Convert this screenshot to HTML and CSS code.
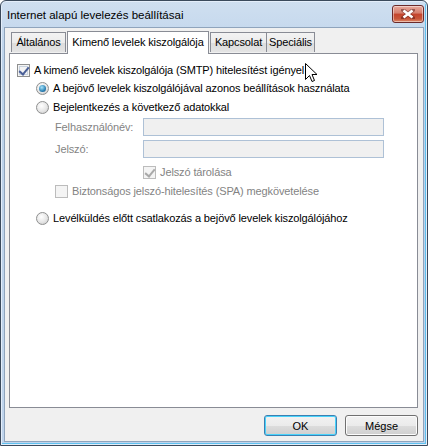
FILE: index.html
```html
<!DOCTYPE html>
<html lang="hu">
<head>
  <meta charset="UTF-8">
  <title>Internet alapú levelezés beállításai</title>
  <link rel="stylesheet" href="styles.css">
</head>
<body>
  <div class="window">
    <div class="titlebar">
      <span class="title">Internet alapú levelezés beállításai</span>
      <button class="close">
        <svg width="14" height="10" viewBox="0 0 14 10">
          <path d="M2 1 L12 9 M12 1 L2 9" stroke="#4a1010" stroke-width="4" stroke-linecap="square" opacity="0.45"/>
          <path d="M2.5 1.5 L11.5 8.5 M11.5 1.5 L2.5 8.5" stroke="#fff" stroke-width="2.6"/>
        </svg>
      </button>
    </div>

    <div class="client">
      <div class="tabs">
        <div class="tab tab-general">Általános</div>
        <div class="tab active tab-outgoing">Kimenő levelek kiszolgálója</div>
        <div class="tab tab-conn">Kapcsolat</div>
        <div class="tab tab-special">Speciális</div>
      </div>

      <div class="panel">
        <div class="row row-smtp">
          <span class="check checked"></span>
          <span>A kimenő levelek kiszolgálója (SMTP) hitelesítést igényel</span>
        </div>
        <div class="row radio-row">
          <span class="radio on"></span>
          <span>A bejövő levelek kiszolgálójával azonos beállítások használata</span>
        </div>
        <div class="row radio-row row-login">
          <span class="radio"></span>
          <span>Bejelentkezés a következő adatokkal</span>
        </div>
        <div class="field-row row-user">
          <span class="field-label">Felhasználónév:</span>
          <span class="input"></span>
        </div>
        <div class="field-row row-pass">
          <span class="field-label">Jelszó:</span>
          <span class="input"></span>
        </div>
        <div class="row row-remember disabled">
          <span class="check checked"></span>
          <span>Jelszó tárolása</span>
        </div>
        <div class="row row-spa disabled">
          <span class="check"></span>
          <span>Biztonságos jelszó-hitelesítés (SPA) megkövetelése</span>
        </div>
        <div class="row radio-row row-before">
          <span class="radio"></span>
          <span>Levélküldés előtt csatlakozás a bejövő levelek kiszolgálójához</span>
        </div>
      </div>

      <div class="buttons">
        <button class="btn default">OK</button>
        <button class="btn">Mégse</button>
      </div>
    </div>

    <svg class="cursor" width="13" height="20" viewBox="0 0 13 20">
      <path d="M0.5 0.5 L0.5 16.5 L4.5 12.5 L7 18.5 L9.5 17.5 L7 11.5 L12 11.5 Z" fill="#fff" stroke="#000" stroke-width="1" stroke-linejoin="miter"/>
    </svg>
  </div>
</body>
</html>
```

FILE: styles.css
```css
* {
  margin: 0;
  padding: 0;
  box-sizing: border-box;
}

body {
  font-family: 'Liberation Sans', Arial, sans-serif;
  font-size: 11px;
  letter-spacing: -0.12px;
  color: #000;
  background: #fff;
}

.window {
  position: relative;
  width: 428px;
  height: 446px;
  border: 1px solid #3b4a5c;
  border-radius: 6px 6px 0 0;
  background: linear-gradient(#cfdff0, #bcd2ea 60px, #bfd4ec);
  box-shadow: inset 0 0 0 1px #e4eefa, inset -2px -2px 0 0 #5fc1ef;
  padding: 0 3px 3px 3px;
  display: flex;
  flex-direction: column;
}

/* title bar */
.titlebar {
  height: 26px;
  display: flex;
  align-items: flex-start;
  justify-content: space-between;
}

.title {
  margin: 7px 0 0 3px;
  line-height: 14px;
  font-size: 11.5px;
  letter-spacing: 0;
  color: #000;
}

.close {
  margin: 4px 0 0 0;
  width: 32px;
  height: 18px;
  border: 1px solid #6b2a2a;
  border-radius: 3px;
  background: linear-gradient(#e9a99c, #d47d6c 45%, #c4432c 50%, #c8563a 80%, #e08c6a);
  box-shadow: inset 0 0 0 1px rgba(255,255,255,0.45);
  display: flex;
  align-items: center;
  justify-content: center;
}

/* client area */
.client {
  flex: 1;
  background: #f0f0f0;
  border: 1px solid #8fa4bc;
  padding: 3px 5px 0 4px;
  display: flex;
  flex-direction: column;
}

.tabs {
  display: flex;
  align-items: flex-end;
  height: 22px;
  padding-left: 2px;
  position: relative;
  z-index: 1;
}

.tab {
  height: 20px;
  border: 1px solid #898c95;
  border-bottom: none;
  background: linear-gradient(#f3f3f3, #ececec 50%, #dcdcdc 51%, #e4e4e4);
  text-align: center;
  line-height: 19px;
  margin-bottom: 1px;
  white-space: nowrap;
}

.tab.active {
  height: 23px;
  background: #fff;
  line-height: 20px;
  margin-bottom: -1px;
  margin-left: 1px;
  margin-right: 1px;
}

.tab-general { width: 55px; }
.tab-outgoing { width: 142px; }
.tab-conn { width: 57px; }
.tab-special { width: 49px; margin-left: -1px; }

.panel {
  height: 355px;
  background: #fff;
  border: 1px solid #898c95;
  padding-top: 6px;
}

/* rows */
.row {
  display: flex;
  align-items: center;
  height: 18px;
  gap: 4px;
  white-space: nowrap;
}

.row-smtp { padding-left: 7px; margin-top: 1px; }
.radio-row { padding-left: 26px; }
.row-login { margin-top: 1px; }
.row-remember { padding-left: 133px; margin-top: 5px; }
.row-spa { padding-left: 45px; margin-top: 1px; }
.row-before { margin-top: 9px; }

.disabled { color: #838383; }

.field-row {
  display: flex;
  align-items: center;
  height: 18px;
  padding-left: 45px;
}

.row-user { margin-top: 2px; }
.row-pass { margin-top: 4px; }

.field-label {
  width: 88px;
  color: #838383;
}

.input {
  width: 241px;
  height: 18px;
  border: 1px solid #aec1d6;
  background: #f0f0f0;
}

/* check boxes and radio buttons */
.check {
  width: 13px;
  height: 13px;
  border: 1px solid #8e8f8f;
  background: #f4f4f4;
  box-shadow: inset 0 0 0 1px #f4f4f4, inset 0 0 0 2px #c8d2de;
  position: relative;
  flex: none;
}

.check.checked::after {
  content: "";
  position: absolute;
  left: 3px;
  top: 0;
  width: 4px;
  height: 8px;
  border-right: 2px solid #4a5f97;
  border-bottom: 2px solid #4a5f97;
  transform: rotate(40deg);
}

.disabled .check {
  border-color: #bcbcbc;
  box-shadow: none;
  background: #f4f4f4;
}

.disabled .check.checked::after {
  border-color: #a9a9a9;
}

.radio {
  width: 13px;
  height: 13px;
  border-radius: 50%;
  border: 1px solid #8e8f8f;
  background: radial-gradient(circle at 40% 35%, #ffffff, #e6e6e6 55%, #c4c4c4);
  position: relative;
  flex: none;
}

.radio.on::after {
  content: "";
  position: absolute;
  left: 2px;
  top: 2px;
  width: 7px;
  height: 7px;
  border-radius: 50%;
  background: radial-gradient(circle at 40% 35%, #a8e4fb, #2d83b6 60%, #0f3f6e);
}

/* buttons */
.buttons {
  display: flex;
  justify-content: flex-end;
  gap: 8px;
  padding-top: 7px;
  padding-right: 0;
}

.btn {
  width: 73px;
  height: 21px;
  font-family: inherit;
  font-size: 11px;
  color: #000;
  border: 1px solid #707070;
  border-radius: 3px;
  background: linear-gradient(#f2f2f2, #ebebeb 50%, #dddddd 51%, #cfcfcf);
  box-shadow: inset 0 0 0 1px #fcfcfc;
}

.btn.default {
  border-color: #3c7fb1;
  box-shadow: inset 0 0 0 1px #48d3fb;
}

.cursor {
  position: absolute;
  left: 304px;
  top: 62px;
}
```
